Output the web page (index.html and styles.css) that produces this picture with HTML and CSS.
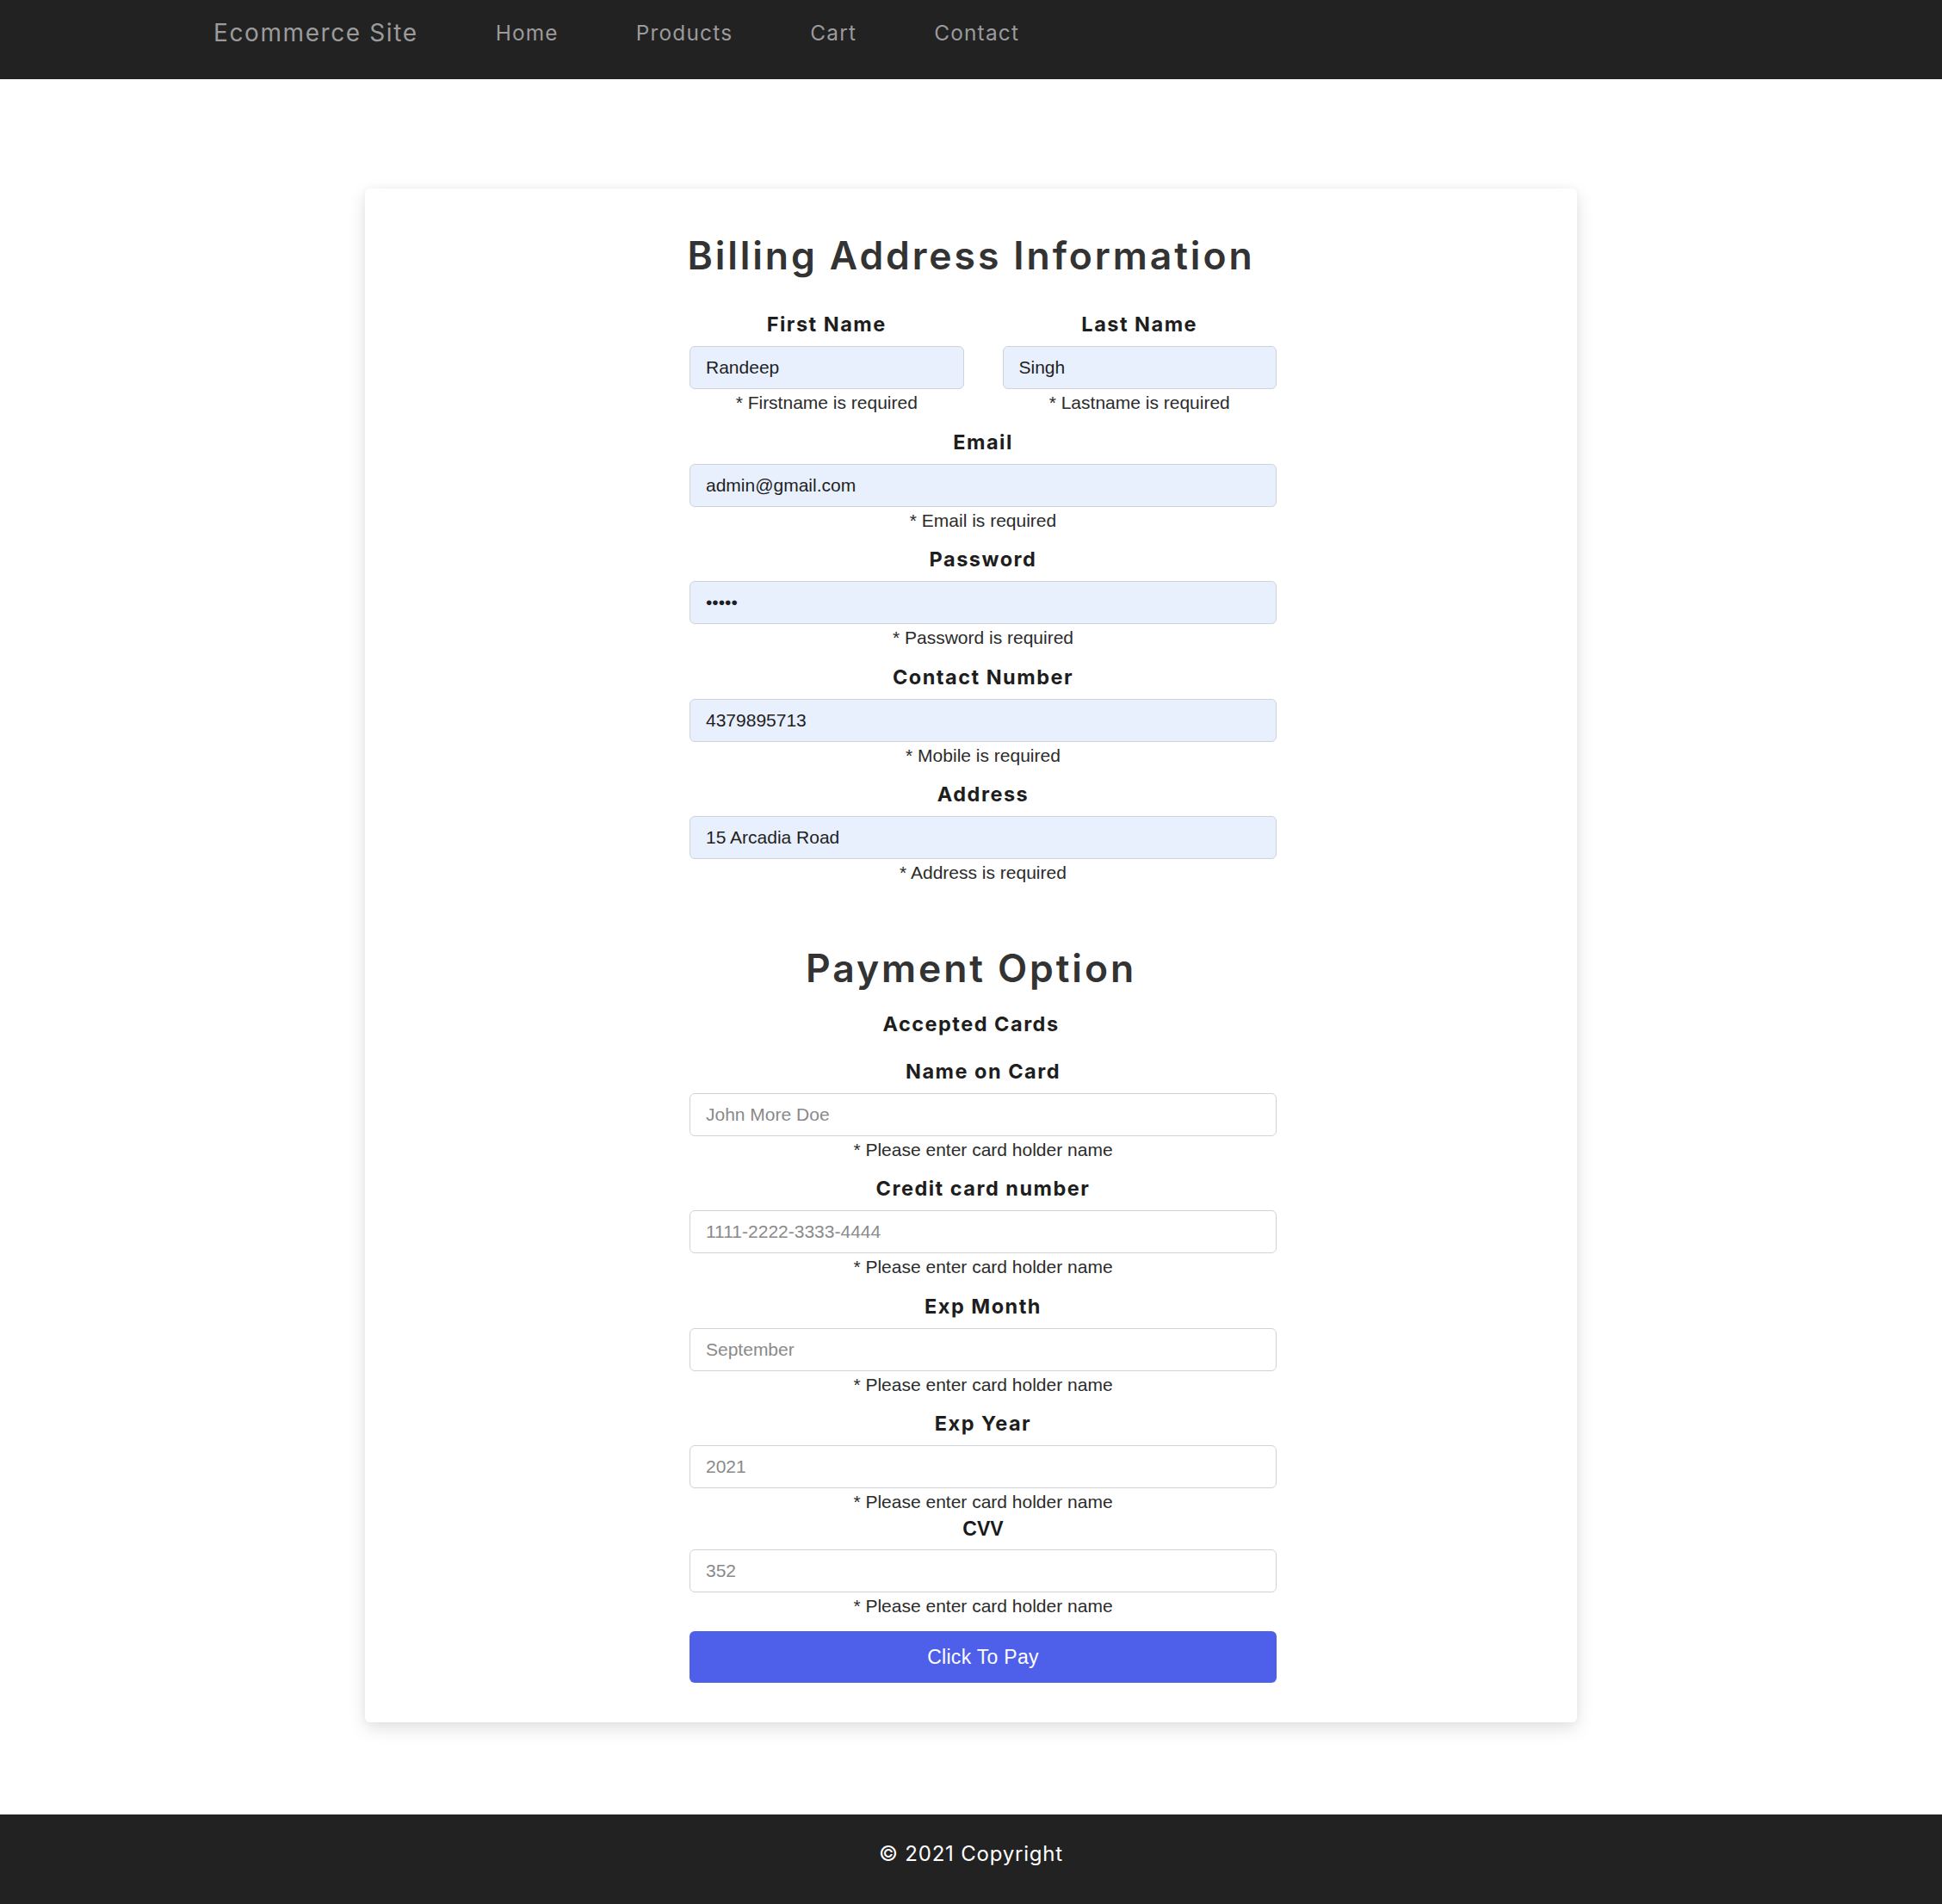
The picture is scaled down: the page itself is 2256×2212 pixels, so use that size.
FILE: index.html
```html
<!DOCTYPE html>
<html lang="en">
<head>
<meta charset="utf-8">
<title>Ecommerce Site - Checkout</title>
<link rel="stylesheet" href="styles.css">
</head>
<body>
<nav class="navbar">
  <a class="brand" href="#">Ecommerce Site</a>
  <ul class="nav-links">
    <li><a href="#">Home</a></li>
    <li><a href="#">Products</a></li>
    <li><a href="#">Cart</a></li>
    <li><a href="#">Contact</a></li>
  </ul>
</nav>

<main class="page">
  <section class="card">
    <h2 class="section-title">Billing Address Information</h2>
    <div class="form-col">
      <div class="row-2">
        <div class="field">
          <label class="field-label">First Name</label>
          <input class="input filled" type="text" value="Randeep">
          <div class="field-error">* Firstname is required</div>
        </div>
        <div class="field">
          <label class="field-label">Last Name</label>
          <input class="input filled" type="text" value="Singh">
          <div class="field-error">* Lastname is required</div>
        </div>
      </div>
      <div class="field">
        <label class="field-label">Email</label>
        <input class="input filled" type="text" value="admin@gmail.com">
        <div class="field-error">* Email is required</div>
      </div>
      <div class="field">
        <label class="field-label">Password</label>
        <input class="input filled" type="password" value="admin">
        <div class="field-error">* Password is required</div>
      </div>
      <div class="field">
        <label class="field-label">Contact Number</label>
        <input class="input filled" type="text" value="4379895713">
        <div class="field-error">* Mobile is required</div>
      </div>
      <div class="field">
        <label class="field-label">Address</label>
        <input class="input filled" type="text" value="15 Arcadia Road">
        <div class="field-error">* Address is required</div>
      </div>
    </div>

    <h2 class="section-title payment-title">Payment Option</h2>
    <h3 class="accepted">Accepted Cards</h3>
    <div class="form-col">
      <div class="field">
        <label class="field-label">Name on Card</label>
        <input class="input" type="text" placeholder="John More Doe">
        <div class="field-error">* Please enter card holder name</div>
      </div>
      <div class="field">
        <label class="field-label">Credit card number</label>
        <input class="input" type="text" placeholder="1111-2222-3333-4444">
        <div class="field-error">* Please enter card holder name</div>
      </div>
      <div class="field">
        <label class="field-label">Exp Month</label>
        <input class="input" type="text" placeholder="September">
        <div class="field-error">* Please enter card holder name</div>
      </div>
      <div class="field">
        <label class="field-label">Exp Year</label>
        <input class="input" type="text" placeholder="2021">
        <div class="field-error">* Please enter card holder name</div>
      </div>
      <div class="field field-cvv">
        <label class="field-label cvv-label">CVV</label>
        <input class="input" type="text" placeholder="352">
        <div class="field-error">* Please enter card holder name</div>
      </div>
      <button class="pay-btn" type="button">Click To Pay</button>
    </div>
  </section>
</main>

<footer class="footer">
  <p class="copyright">© 2021 Copyright</p>
</footer>
</body>
</html>
```

FILE: styles.css
```css
* {
  box-sizing: border-box;
}

html, body {
  margin: 0;
  padding: 0;
  background: #ffffff;
}

body {
  font-family: "Liberation Sans", Arial, sans-serif;
  color: #222;
}

/* ---------- Navbar ---------- */
.navbar {
  height: 92px;
  background: #222222;
  display: flex;
  align-items: flex-start;
  padding: 18px 0 0 248px;
  gap: 90px;
}

.brand {
  font-family: "Inter", sans-serif;
  font-size: 28px;
  line-height: 40px;
  letter-spacing: 1.6px;
  color: #9b9b9b;
  text-decoration: none;
}

.nav-links {
  list-style: none;
  margin: 0;
  padding: 0;
  display: flex;
  gap: 90px;
}

.nav-links a {
  font-family: "Inter", sans-serif;
  font-size: 24.4px;
  line-height: 40px;
  letter-spacing: 1.2px;
  color: #9b9b9b;
  text-decoration: none;
}

/* ---------- Card ---------- */
.page {
  padding: 127px 0 106.5px;
}

.card {
  width: 1408px;
  margin: 0 auto;
  background: #fff;
  border-radius: 6px;
  box-shadow: 0 7px 20px rgba(0, 0, 0, 0.12), 0 0 8px rgba(0, 0, 0, 0.04);
  padding: 52px 0 46px;
  display: flex;
  flex-direction: column;
}

.section-title {
  margin: 0 0 39px;
  text-align: center;
  font-family: "Inter", sans-serif;
  font-weight: 600;
  font-size: 44.5px;
  line-height: 53px;
  letter-spacing: 2.9px;
  color: #333333;
}

.payment-title {
  margin: 69px 0 24px;
}

.accepted {
  margin: 0 0 27px;
  text-align: center;
  font-family: "Inter", sans-serif;
  font-weight: 700;
  font-size: 23.5px;
  line-height: 28px;
  letter-spacing: 1.5px;
  color: #1e1e1e;
}

.form-col {
  width: 682px;
  align-self: center;
  margin-left: 28px;
  display: flex;
  flex-direction: column;
}

.row-2 {
  display: grid;
  grid-template-columns: 1fr 1fr;
  gap: 45px;
}

.field {
  display: flex;
  flex-direction: column;
}

.form-col > .field,
.form-col > .row-2 {
  margin-top: 16px;
}

.form-col > :first-child {
  margin-top: 0;
}

.form-col > .field-cvv {
  margin-top: 0;
}

.field-label {
  display: block;
  text-align: center;
  font-family: "Inter", sans-serif;
  font-weight: 700;
  font-size: 23.5px;
  line-height: 28px;
  letter-spacing: 1.5px;
  color: #1e1e1e;
  margin-bottom: 11px;
}

.cvv-label {
  font-family: "Liberation Sans", Arial, sans-serif;
  font-size: 23px;
  letter-spacing: 0;
  line-height: 31px;
  margin-bottom: 8px;
  color: #1a1a1a;
}

.input {
  width: 100%;
  height: 50px;
  margin: 0;
  padding: 0 18px;
  border: 1px solid #cfd3d8;
  border-radius: 6px;
  background: #ffffff;
  font-family: "Liberation Sans", Arial, sans-serif;
  font-size: 21px;
  color: #1f1f1f;
  outline: none;
}

.input.filled {
  background: #e8f0fe;
}

.input::placeholder {
  color: #8a8a8a;
  opacity: 1;
}

.field-error {
  text-align: center;
  font-size: 21px;
  line-height: 31.5px;
  color: #2b2b2b;
}

.pay-btn {
  margin-top: 14px;
  height: 60px;
  width: 100%;
  border: none;
  border-radius: 6px;
  background: #4e5fea;
  color: #ffffff;
  font-family: "Liberation Sans", Arial, sans-serif;
  font-size: 23px;
  letter-spacing: 0.3px;
  cursor: pointer;
}

/* ---------- Footer ---------- */
.footer {
  height: 104px;
  background: #222222;
  padding-top: 28px;
}

.copyright {
  margin: 0;
  text-align: center;
  font-family: "Inter", sans-serif;
  font-size: 24px;
  line-height: 36px;
  letter-spacing: 0.8px;
  color: #ffffff;
}
```
